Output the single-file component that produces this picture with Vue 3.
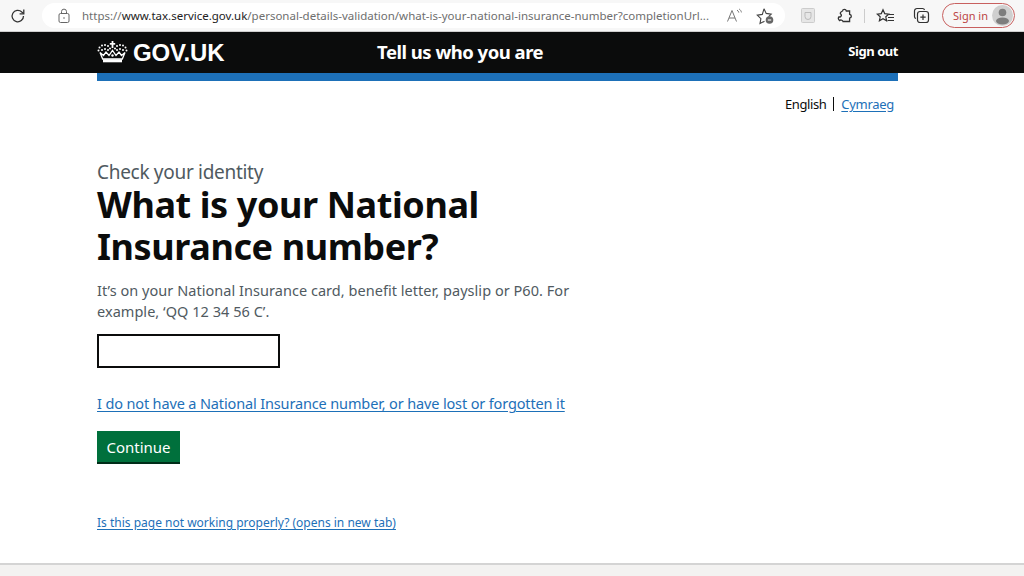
<script setup>
const crownDots = [
  [1.5, 9.5], [2.5, 6.5], [5, 4.5], [8, 4], [11, 5], [13, 7.5],
  [29.5, 9.5], [28.5, 6.5], [26, 4.5], [23, 4], [20, 5], [18, 7.5],
  [5, 9], [8, 8], [11, 9], [26, 9], [23, 8], [20, 9]
]
</script>

<template>
  <div class="page">
    <div class="chrome">
      <svg class="reload" width="18" height="18" viewBox="0 0 18 18" fill="none" stroke="#333" stroke-width="1.3"><path d="M14.5 9a5.7 5.7 0 1 1-1.7-4L14.6 6.6"/><path d="M14.8 2.6v4.2h-4.2" /></svg>
      <div class="omnibox">
        <svg class="lock" width="14" height="16" viewBox="0 0 14 16" fill="none" stroke="#666" stroke-width="1"><rect x="2" y="5.5" width="10" height="9" rx="1.5"/><path d="M4.5 5.5V3.6a2.5 2.5 0 0 1 5 0v1.900"/><circle cx="7" cy="10" r="0.8" fill="#666" stroke="none"/></svg>
        <span class="url"><span class="dim">https://</span><span class="host">www.tax.service.gov.uk</span><span class="dim">/personal-details-validation/what-is-your-national-insurance-number?completionUrl...</span></span>
        <svg class="read" width="18" height="16" viewBox="0 0 18 16" fill="none" stroke="#777" stroke-width="1"><path d="M1.500 13.500L6 2.500l4.500 11M3 10h6"/><path d="M11 2c1 .6 1.600 1.500 1.800 2.600M13.200 1c1.200.9 2 2 2.200 3.400"/></svg>
        <svg class="fav" width="20" height="18" viewBox="0 0 20 18" fill="none" stroke="#444" stroke-width="1.100"><path d="M9 1.800l2.200 4.600 5 .7-2.600 2.500M9.500 14.200l-4.500 2.400.9-5-3.600-3.500 5-.7L9 1.800"/><circle cx="14.500" cy="13" r="3.800" fill="#666" stroke="none"/><path d="M12.800 13h3.400" stroke="#fff"/></svg>
      </div>
      <svg class="ext" width="14" height="15" viewBox="0 0 14 15"><rect x="0.500" y="0.500" width="13" height="14" rx="1" fill="#e6e6e6" stroke="#ccc"/><path d="M4 4.500h6v4a3 3 0 0 1-6 0z" fill="none" stroke="#bbb"/></svg>
      <svg class="puzzle" width="16" height="16" viewBox="0 0 16 16" fill="none" stroke="#333" stroke-width="1.300"><path d="M5.500 3c.3-2.300 3.500-2.300 3.800 0h3.300v3.300c2.300.3 2.300 3.500 0 3.800v3.400H6c-.3-1.800-2.700-1.800-3.500-.9-1-1-1.400-2.800-.6-3.800 1.700.9 3.500-1.500 1.600-3-.6-.8.400-2 2-2.800z"/></svg>
      <span class="sep"></span>
      <svg class="favs" width="20" height="16" viewBox="0 0 20 16" fill="none" stroke="#333" stroke-width="1.200"><path d="M7 1.800l1.700 3.800 4 .5-2.900 2.700.8 4-3.600-2-3.600 2 .8-4L1.300 6.100l4-.5z"/><path d="M13 6.500h5M12 9.500h6M11.500 12.500h6.500"/></svg>
      <svg class="coll" width="18" height="17" viewBox="0 0 18 17" fill="none" stroke="#333" stroke-width="1.200"><path d="M3 11.500A2 2 0 0 1 1.500 9.500V4a2.500 2.500 0 0 1 2.500-2.500h5.500a2 2 0 0 1 2 1.500"/><rect x="4.500" y="4.500" width="11" height="11" rx="2.500"/><path d="M10 7.500v5.500M7.300 10.200h5.400"/></svg>
      <div class="signin">
        <span>Sign in</span>
        <span class="avatar">
          <svg width="21" height="21" viewBox="0 0 21 21"><circle cx="10.500" cy="10.500" r="10.500" fill="#cfcfcf"/><circle cx="10.500" cy="7.500" r="3.800" fill="#7d7d7d"/><ellipse cx="10.500" cy="16" rx="6.500" ry="3.500" fill="#7d7d7d"/></svg>
        </span>
      </div>
    </div>

    <header class="header">
      <div class="header-inner">
        <a class="logo">
          <svg class="crown" width="31" height="22" viewBox="0 0 31 22" fill="#fff">
            <rect x="14.600" y="0" width="1.800" height="7"/>
            <rect x="12.800" y="2" width="5.400" height="1.700"/>
            <circle v-for="(d, i) in crownDots" :key="i" :cx="d[0]" :cy="d[1]" r="1"/>
            <path d="M3 11.500l3.500 3 2.500-3.500 3 3.500 3.500-5 3.500 5 3-3.500 2.500 3.500 3.500-3-2.700 6.500H5.700z" fill="none" stroke="#fff" stroke-width="1.300"/>
            <circle cx="15.500" cy="14.500" r="1.200"/>
            <rect x="6" y="18.300" width="19" height="3"/>
          </svg>
          <span class="wordmark">GOV.UK</span>
        </a>
        <span class="service">Tell us who you are</span>
        <a class="signout">Sign out</a>
      </div>
    </header>

    <main class="wrap">
      <div class="blue"></div>
      <nav class="lang">
        <span class="current">English</span>
        <span class="bar"></span>
        <a class="link">Cymraeg</a>
      </nav>

      <span class="caption">Check your identity</span>
      <h1 class="title">What is your National<br>Insurance number?</h1>
      <p class="hint">It’s on your National Insurance card, benefit letter, payslip or P60. For<br>example, ‘QQ 12 34 56 C’.</p>
      <input class="input" type="text" aria-label="National Insurance number" />
      <a class="link big">I do not have a National Insurance number, or have lost or forgotten it</a>
      <button class="btn" type="button">Continue</button>
      <a class="link small">Is this page not working properly? (opens in new tab)</a>
    </main>

    <footer class="footer"></footer>
  </div>
</template>

<style>
html, body { margin: 0; overflow: hidden; background: #fff; }
</style>

<style scoped>
.page {
  width: 1024px;
  height: 576px;
  display: flex;
  flex-direction: column;
  overflow: hidden;
  font-family: "Noto Sans", sans-serif;
  color: #0b0c0c;
  background: #fff;
}
.chrome {
  height: 32px;
  flex: none;
  box-sizing: border-box;
  display: flex;
  align-items: center;
  background: #f7f7f7;
  border-bottom: 1px solid #cfcfcf;
}
.reload { margin-left: 9px; flex: none; }
.omnibox {
  margin-left: 15px;
  width: 743px;
  height: 25px;
  flex: none;
  box-sizing: border-box;
  background: #fff;
  border-radius: 13px;
  display: flex;
  align-items: center;
  padding-left: 15px;
}
.lock { flex: none; }
.url {
  margin-left: 11px;
  width: 633px;
  flex: none;
  font-size: 11.500px;
  white-space: nowrap;
  overflow: hidden;
}
.dim { color: #6e6e6e; }
.host { color: #222; }
.read { margin-left: 11px; flex: none; }
.fav { margin-left: 11px; flex: none; }
.ext { margin-left: 16px; flex: none; }
.puzzle { margin-left: 22px; flex: none; }
.sep { width: 1px; height: 14px; background: #ccc; margin-left: 11px; flex: none; }
.favs { margin-left: 11px; flex: none; }
.coll { margin-left: 17px; flex: none; }
.signin {
  margin-left: 11px;
  width: 73px;
  height: 25px;
  box-sizing: border-box;
  border: 1.500px solid #c8605f;
  border-radius: 13px;
  display: flex;
  align-items: center;
  justify-content: space-between;
  padding: 0 1px 0 10px;
  font-size: 11px;
  color: #bb4444;
  flex: none;
}
.avatar { display: flex; }
.header {
  height: 41px;
  flex: none;
  background: #0b0c0c;
  color: #fff;
}
.header-inner {
  margin-left: 97px;
  width: 801px;
  height: 100%;
  display: flex;
  align-items: center;
}
.logo { display: flex; align-items: center; width: 280px; flex: none; }
.crown { flex: none; margin-bottom: 1px; }
.wordmark {
  margin-left: 5px;
  font-family: "Liberation Sans", sans-serif;
  font-weight: 700;
  font-size: 24px;
  letter-spacing: -0.2px;
}
.service { font-weight: 700; font-size: 18.500px; letter-spacing: -0.5px; padding-bottom: 2px; }
.signout { margin-left: auto; font-weight: 700; font-size: 13px; letter-spacing: -0.45px; padding-bottom: 4px; }
.wrap {
  margin-left: 97px;
  width: 801px;
  flex: 1;
  display: flex;
  flex-direction: column;
  align-items: flex-start;
}
.blue { width: 100%; height: 8px; background: #1d70b8; flex: none; }
.lang {
  align-self: flex-end;
  display: flex;
  align-items: center;
  margin-top: 13px;
  margin-right: 4px;
  font-size: 13px;
  line-height: 20px;
}
.current { letter-spacing: -0.4px; }
.lang .link { letter-spacing: -0.3px; }
.bar { width: 1px; height: 14px; background: #0b0c0c; margin: 0 7px 0 7px; }
.link { color: #1d70b8; text-decoration: underline; text-underline-offset: 2px; }
.caption {
  margin-top: 46px;
  font-size: 19px;
  line-height: 24px;
  letter-spacing: -0.3px;
  color: #505a5f;
}
.title {
  margin: 0;
  font-weight: 700;
  font-size: 36px;
  line-height: 41.500px;
  letter-spacing: -0.4px;
  color: #0b0c0c;
}
.hint {
  margin: 13px 0 0;
  font-size: 14.500px;
  line-height: 21px;
  letter-spacing: 0.04px;
  color: #505a5f;
}
.input {
  margin-top: 12px;
  width: 183px;
  height: 34px;
  box-sizing: border-box;
  border: 2px solid #0b0c0c;
  border-radius: 0;
  padding: 0;
  background: #fff;
  outline: none;
}
.big { margin-top: 24px; font-size: 14.500px; line-height: 22px; letter-spacing: -0.14px; }
.btn {
  margin-top: 17px;
  width: 83px;
  height: 33px;
  box-sizing: border-box;
  border: 0;
  border-bottom: 2px solid #002d18;
  background: #00703c;
  color: #fff;
  font-family: inherit;
  font-size: 15px;
  padding: 0;
}
.small { margin-top: 50px; font-size: 12px; line-height: 18px; }
.footer {
  height: 13px;
  flex: none;
  box-sizing: border-box;
  background: #f3f2f1;
  border-top: 2px solid #d4d4d4;
}
</style>
